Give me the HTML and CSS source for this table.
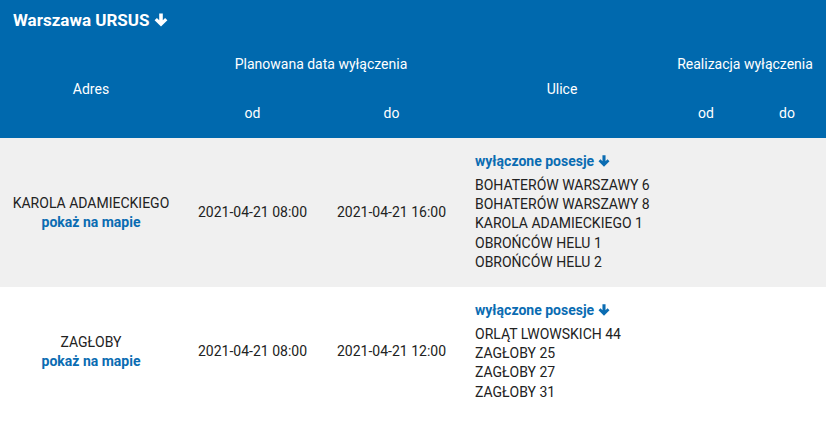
FILE: index.html
```html
<!DOCTYPE html>
<html lang="pl">
<head>
<meta charset="utf-8">
<title>Wyłączenia</title>
<link rel="stylesheet" href="styles.css">
</head>
<body>
<div class="panel">
  <div class="title">Warszawa URSUS <svg class="arrow" viewBox="0 0 14 14" width="14" height="14"><path d="M7 13.6 L0.6 7.2 L2.9 4.9 L5.2 7.2 L5.2 0.4 L8.8 0.4 L8.8 7.2 L11.1 4.9 L13.4 7.2 Z" fill="currentColor"/></svg></div>
  <table class="grid">
    <colgroup>
      <col class="c-addr"><col class="c-od"><col class="c-do"><col class="c-ul"><col class="c-rod"><col class="c-rdo">
    </colgroup>
    <thead>
      <tr class="h1">
        <th rowspan="2">Adres</th>
        <th colspan="2">Planowana data wyłączenia</th>
        <th rowspan="2">Ulice</th>
        <th colspan="2">Realizacja wyłączenia</th>
      </tr>
      <tr class="h2">
        <th>od</th><th>do</th><th>od</th><th>do</th>
      </tr>
    </thead>
    <tbody>
      <tr class="odd">
        <td class="addr">KAROLA ADAMIECKIEGO<br><a class="link" href="#">pokaż na mapie</a></td>
        <td class="date">2021-04-21 08:00</td>
        <td class="date">2021-04-21 16:00</td>
        <td class="streets">
          <a class="link toggle" href="#">wyłączone posesje <svg class="arrow" viewBox="0 0 14 14" width="12" height="12"><path d="M7 13.6 L0.6 7.2 L2.9 4.9 L5.2 7.2 L5.2 0.4 L8.8 0.4 L8.8 7.2 L11.1 4.9 L13.4 7.2 Z" fill="currentColor"/></svg></a>
          <ul class="list">
            <li>BOHATERÓW WARSZAWY 6</li>
            <li>BOHATERÓW WARSZAWY 8</li>
            <li>KAROLA ADAMIECKIEGO 1</li>
            <li>OBROŃCÓW HELU 1</li>
            <li>OBROŃCÓW HELU 2</li>
          </ul>
        </td>
        <td></td><td></td>
      </tr>
      <tr class="even">
        <td class="addr">ZAGŁOBY<br><a class="link" href="#">pokaż na mapie</a></td>
        <td class="date">2021-04-21 08:00</td>
        <td class="date">2021-04-21 12:00</td>
        <td class="streets">
          <a class="link toggle" href="#">wyłączone posesje <svg class="arrow" viewBox="0 0 14 14" width="12" height="12"><path d="M7 13.6 L0.6 7.2 L2.9 4.9 L5.2 7.2 L5.2 0.4 L8.8 0.4 L8.8 7.2 L11.1 4.9 L13.4 7.2 Z" fill="currentColor"/></svg></a>
          <ul class="list">
            <li>ORLĄT LWOWSKICH 44</li>
            <li>ZAGŁOBY 25</li>
            <li>ZAGŁOBY 27</li>
            <li>ZAGŁOBY 31</li>
          </ul>
        </td>
        <td></td><td></td>
      </tr>
    </tbody>
  </table>
</div>
</body>
</html>
```

FILE: styles.css
```css
html, body {
  margin: 0;
  padding: 0;
  background: #fff;
}
body {
  font-family: Roboto, "Liberation Sans", sans-serif;
  font-size: 14px;
  color: #222;
}
.panel {
  width: 826px;
}
.title {
  background: #0069ae;
  color: #fff;
  font-weight: 700;
  font-size: 17px;
  height: 40px;
  line-height: 40px;
  padding-left: 13px;
  box-sizing: border-box;
}
.title .arrow {
  vertical-align: -1px;
}
.grid {
  width: 826px;
  border-collapse: collapse;
  table-layout: fixed;
}
.c-addr { width: 182px; }
.c-od { width: 141px; }
.c-do { width: 137px; }
.c-ul { width: 204px; }
.c-rod { width: 84px; }
.c-rdo { width: 78px; }
.grid thead {
  background: #0069ae;
  color: #fff;
}
.grid th {
  font-weight: 400;
  text-align: center;
  vertical-align: middle;
  padding: 0;
  line-height: 20px;
  white-space: nowrap;
}
.h1 { height: 48px; }
.h2 { height: 50px; }
.grid td {
  padding: 0;
  vertical-align: middle;
  text-align: center;
  line-height: 19px;
  white-space: nowrap;
}
.odd { background: #f0f0f0; }
.even { background: #fff; }
.link {
  color: #0a6cb2;
  font-weight: 700;
  text-decoration: none;
}
.grid td.streets {
  text-align: left;
  vertical-align: top;
  padding: 13px 0 15px 15px;
}
.toggle {
  display: block;
  line-height: 20px;
  margin-bottom: 5px;
}
.toggle .arrow {
  vertical-align: -1px;
}
.list {
  list-style: none;
  margin: 0;
  padding: 0;
  line-height: 19.2px;
}
```
